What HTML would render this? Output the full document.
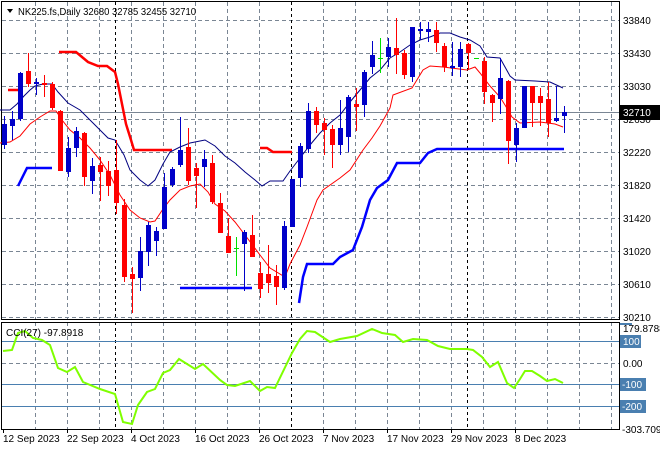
<!DOCTYPE html>
<html><head><meta charset="utf-8"><style>
html,body{margin:0;padding:0;background:#fff;}
svg{display:block;font-family:"Liberation Sans",sans-serif;}
</style></head><body>
<svg width="660" height="450" viewBox="0 0 660 450" xmlns="http://www.w3.org/2000/svg">
<rect width="660" height="450" fill="#fff"/>
<g stroke="#7a8694" stroke-width="1" stroke-dasharray="4,3">
<path d="M2 20.5H619M2 53.5H619M2 86.5H619M2 119.5H619M2 152.5H619M2 185.5H619M2 218.5H619M2 251.5H619M2 284.5H619M2 317.5H619"/>
<path d="M35.5 2V319M67.5 2V319M99.5 2V319M131.5 2V319M163.5 2V319M195.5 2V319M227.5 2V319M259.5 2V319M323.5 2V319M355.5 2V319M387.5 2V319M419.5 2V319M451.5 2V319M483.5 2V319M515.5 2V319M547.5 2V319M579.5 2V319M611.5 2V319"/>
<path d="M35.5 322V429M67.5 322V429M99.5 322V429M131.5 322V429M163.5 322V429M195.5 322V429M227.5 322V429M259.5 322V429M323.5 322V429M355.5 322V429M387.5 322V429M419.5 322V429M451.5 322V429M483.5 322V429M515.5 322V429M547.5 322V429M579.5 322V429M611.5 322V429"/>
<path d="M2 363.5H619"/>
</g>
<g stroke="#000" stroke-width="1" stroke-dasharray="3,3">
<path d="M115.5 2V319M291.5 2V319M467.5 2V319M115.5 322V429M291.5 322V429M467.5 322V429"/>
</g>
<g stroke="#4a7fb0" stroke-width="1">
<path d="M2 341.5H619M2 384.5H619M2 406.5H619"/>
</g>
<path d="M2 112.5H619" stroke="#7a8694" stroke-width="1"/>
<g stroke="#000" stroke-width="1" fill="none">
<path d="M1.5 1.5H619.5V319.5H1.5Z"/>
<path d="M1.5 322.5H619.5V429.5H1.5Z"/>
</g>
<g fill="none" stroke="#ff0000" stroke-width="2.5">
<polyline points="8,90 18,90"/>
<polyline points="59,52 76,52 82,57 88,62 98,66 107,66 115,72 118,84 122,104 126,124 131,140 134,150 172,150"/>
<polyline points="260,148 267,148 273,152 292,152"/>
</g>
<g fill="none" stroke="#0000ff" stroke-width="2.5">
<polyline points="18,186 22,178 27,168 52,168"/>
<polyline points="180,288 252,288"/>
<polyline points="299,303 303,277 307,264 333,264 340,257 353,250 362,227 370,200 377,188 388,180 397,163 420,163 428,153 437,149 564,149"/>
</g>
<polyline fill="none" stroke="#000080" stroke-width="1" points="0,110 10,110 17,104 24,96 30,90 35,86 43,84 52,84 58,92 68,103 80,110 95,125 108,138 115,140 124,155 130,170 140,180 148,186 155,180 163,164 170,152 180,147 190,143 200,141 205,140 215,146 225,156 235,163 245,172 255,180 262,186 270,181 283,181 290,171 300,158 310,145 320,133 330,123 340,115 350,102 360,90 370,78 380,70 390,58 400,52 410,45 420,40 430,37 440,33 450,33 460,37 470,40 480,46 487,57 500,58 510,76 515,80 535,81 550,82 563,88"/>
<polyline fill="none" stroke="#ff0000" stroke-width="1" points="0,143 10,142 20,136 30,124 40,117 50,111 56,111 62,120 70,130 80,138 90,148 100,160 110,175 120,195 130,210 140,218 150,222 155,221 163,209 170,200 180,190 190,186 200,184 208,192 215,204 225,211 235,222 245,235 260,255 270,268 285,277 290,264 300,245 307,227 317,200 323,190 340,178 350,170 363,150 372,138 380,126 390,108 393,95 412,88 423,70 430,66 443,67 467,70 475,67 480,73 490,86 500,97 505,105 512,117 520,123 540,122 555,124 563,127"/>
<g>
<g fill="#ff0000">
<rect x="28" y="53" width="1" height="34"/><rect x="26" y="71" width="5" height="13"/>
<rect x="44" y="75" width="1" height="22"/><rect x="42" y="83" width="5" height="2"/>
<rect x="52" y="82" width="1" height="28"/><rect x="50" y="84" width="5" height="24"/>
<rect x="60" y="110" width="1" height="61"/><rect x="58" y="111" width="5" height="60"/>
<rect x="84" y="132" width="1" height="54"/><rect x="82" y="133" width="5" height="44"/>
<rect x="100" y="157" width="1" height="44"/><rect x="98" y="165" width="5" height="7"/>
<rect x="108" y="161" width="1" height="35"/><rect x="106" y="171" width="5" height="15"/>
<rect x="116" y="140" width="1" height="74"/><rect x="114" y="170" width="5" height="33"/>
<rect x="124" y="199" width="1" height="83"/><rect x="122" y="205" width="5" height="72"/>
<rect x="132" y="267" width="1" height="46"/><rect x="130" y="274" width="5" height="5"/>
<rect x="188" y="128" width="1" height="57"/><rect x="186" y="147" width="5" height="34"/>
<rect x="196" y="163" width="1" height="45"/><rect x="194" y="168" width="5" height="8"/>
<rect x="212" y="155" width="1" height="49"/><rect x="210" y="163" width="5" height="39"/>
<rect x="220" y="193" width="1" height="40"/><rect x="218" y="203" width="5" height="30"/>
<rect x="228" y="218" width="1" height="35"/><rect x="226" y="236" width="5" height="17"/>
<rect x="252" y="215" width="1" height="42"/><rect x="250" y="235" width="5" height="22"/>
<rect x="260" y="262" width="1" height="36"/><rect x="258" y="273" width="5" height="16"/>
<rect x="268" y="245" width="1" height="48"/><rect x="266" y="274" width="5" height="9"/>
<rect x="276" y="265" width="1" height="40"/><rect x="274" y="276" width="5" height="11"/>
<rect x="316" y="107" width="1" height="26"/><rect x="314" y="111" width="5" height="14"/>
<rect x="324" y="118" width="1" height="37"/><rect x="322" y="123" width="5" height="7"/>
<rect x="332" y="125" width="1" height="43"/><rect x="330" y="129" width="5" height="16"/>
<rect x="356" y="88" width="1" height="43"/><rect x="354" y="104" width="5" height="3"/>
<rect x="396" y="18" width="1" height="56"/><rect x="394" y="48" width="5" height="7"/>
<rect x="404" y="50" width="1" height="29"/><rect x="402" y="53" width="5" height="22"/>
<rect x="436" y="22" width="1" height="30"/><rect x="434" y="30" width="5" height="13"/>
<rect x="444" y="43" width="1" height="29"/><rect x="442" y="46" width="5" height="21"/>
<rect x="468" y="43" width="1" height="26"/><rect x="466" y="44" width="5" height="9"/>
<rect x="484" y="57" width="1" height="47"/><rect x="482" y="61" width="5" height="31"/>
<rect x="492" y="94" width="1" height="28"/><rect x="490" y="95" width="5" height="8"/>
<rect x="508" y="80" width="1" height="84"/><rect x="506" y="81" width="5" height="60"/>
<rect x="532" y="86" width="1" height="41"/><rect x="530" y="86" width="5" height="17"/>
<rect x="540" y="88" width="1" height="38"/><rect x="538" y="96" width="5" height="7"/>
<rect x="548" y="82" width="1" height="55"/><rect x="546" y="99" width="5" height="24"/>
</g>
<g fill="#0000c8">
<rect x="4" y="116" width="1" height="33"/><rect x="2" y="124" width="5" height="21"/>
<rect x="12" y="111" width="1" height="29"/><rect x="10" y="119" width="5" height="7"/>
<rect x="20" y="72" width="1" height="49"/><rect x="18" y="73" width="5" height="46"/>
<rect x="36" y="78" width="1" height="17"/><rect x="34" y="82" width="5" height="2"/>
<rect x="68" y="137" width="1" height="40"/><rect x="66" y="148" width="5" height="24"/>
<rect x="76" y="127" width="1" height="30"/><rect x="74" y="131" width="5" height="17"/>
<rect x="92" y="158" width="1" height="36"/><rect x="90" y="166" width="5" height="15"/>
<rect x="140" y="237" width="1" height="54"/><rect x="138" y="251" width="5" height="27"/>
<rect x="148" y="222" width="1" height="44"/><rect x="146" y="225" width="5" height="27"/>
<rect x="156" y="227" width="1" height="29"/><rect x="154" y="231" width="5" height="10"/>
<rect x="164" y="173" width="1" height="56"/><rect x="162" y="187" width="5" height="42"/>
<rect x="172" y="167" width="1" height="20"/><rect x="170" y="169" width="5" height="16"/>
<rect x="180" y="117" width="1" height="50"/><rect x="178" y="150" width="5" height="15"/>
<rect x="204" y="150" width="1" height="37"/><rect x="202" y="159" width="5" height="8"/>
<rect x="244" y="230" width="1" height="61"/><rect x="242" y="232" width="5" height="12"/>
<rect x="284" y="221" width="1" height="69"/><rect x="282" y="226" width="5" height="62"/>
<rect x="292" y="179" width="1" height="48"/><rect x="290" y="179" width="5" height="48"/>
<rect x="300" y="143" width="1" height="44"/><rect x="298" y="146" width="5" height="32"/>
<rect x="308" y="103" width="1" height="50"/><rect x="306" y="111" width="5" height="38"/>
<rect x="340" y="100" width="1" height="55"/><rect x="338" y="128" width="5" height="17"/>
<rect x="348" y="95" width="1" height="57"/><rect x="346" y="97" width="5" height="40"/>
<rect x="364" y="70" width="1" height="47"/><rect x="362" y="72" width="5" height="33"/>
<rect x="372" y="41" width="1" height="33"/><rect x="370" y="55" width="5" height="12"/>
<rect x="388" y="38" width="1" height="29"/><rect x="386" y="47" width="5" height="10"/>
<rect x="412" y="27" width="1" height="55"/><rect x="410" y="27" width="5" height="50"/>
<rect x="420" y="22" width="1" height="18"/><rect x="418" y="29" width="5" height="2"/>
<rect x="428" y="22" width="1" height="20"/><rect x="426" y="29" width="5" height="3"/>
<rect x="452" y="42" width="1" height="34"/><rect x="450" y="66" width="5" height="2"/>
<rect x="460" y="42" width="1" height="35"/><rect x="458" y="49" width="5" height="18"/>
<rect x="500" y="58" width="1" height="56"/><rect x="498" y="78" width="5" height="21"/>
<rect x="516" y="123" width="1" height="39"/><rect x="514" y="128" width="5" height="17"/>
<rect x="524" y="86" width="1" height="42"/><rect x="522" y="86" width="5" height="42"/>
<rect x="556" y="86" width="1" height="36"/><rect x="554" y="118" width="5" height="3"/>
<rect x="564" y="106" width="1" height="27"/><rect x="562" y="112" width="5" height="4"/>
</g>
<g fill="#00e000">
<rect x="236" y="237" width="1" height="39"/><rect x="234" y="248" width="5" height="1"/>
<rect x="380" y="38" width="1" height="35"/><rect x="378" y="58" width="5" height="1"/>
<rect x="474" y="58" width="5" height="1"/>
</g>
</g>
<polyline fill="none" stroke="#7fff00" stroke-width="2" points="3,351 12,350 18,333 25,331 33,338 42,340 50,345 58,368 67,372 75,367 83,382 100,389 115,394 123,422 132,424 138,405 147,392 155,389 163,373 170,370 179,359 195,369 203,364 220,380 227,385 235,386 250,381 260,391 267,387 275,388 292,353 300,339 307,331 315,332 330,342 340,339 357,336 372,329 382,333 395,335 403,342 413,339 427,340 438,346 450,349 467,349 473,350 482,357 490,367 498,362 507,383 514,388 520,379 525,371 532,371 540,376 547,381 555,379 563,383"/>
<path d="M7 9H13L10 13Z" fill="#000"/>
<text x="18" y="15" font-size="10.5" fill="#000" textLength="178" lengthAdjust="spacingAndGlyphs">NK225.fs,Daily  32680 32785 32455 32710</text>
<text x="6" y="336" font-size="10" fill="#000">CCI(27) -97.8918</text>
<g font-size="10" fill="#000">
<text x="623" y="24">33840</text>
<text x="623" y="57">33430</text>
<text x="623" y="90">33030</text>
<text x="623" y="123">32630</text>
<text x="623" y="156">32220</text>
<text x="623" y="189">31820</text>
<text x="623" y="222">31420</text>
<text x="623" y="255">31020</text>
<text x="623" y="288">30610</text>
<text x="623" y="321">30210</text>
</g>
<rect x="620" y="105" width="40" height="15" fill="#000"/>
<text x="623" y="116" font-size="10" fill="#fff">32710</text>
<rect x="620" y="323" width="12" height="2" fill="#4a7fb0"/>
<rect x="620" y="335" width="21" height="13" fill="#4a7fb0"/>
<rect x="620" y="378" width="26" height="13" fill="#4a7fb0"/>
<rect x="620" y="400" width="26" height="13" fill="#4a7fb0"/>
<g font-size="10" fill="#000">
<text x="623" y="332">179.8788</text>
<text x="623" y="367">0.00</text>
<text x="622" y="433">-303.709</text>
</g>
<g font-size="10" fill="#fff">
<text x="623" y="345">100</text>
<text x="622" y="388">-100</text>
<text x="622" y="410">-200</text>
</g>
<g stroke="#000" stroke-width="1">
<path d="M3.5 429V433M67.5 429V433M131.5 429V433M195.5 429V433M259.5 429V433M323.5 429V433M387.5 429V433M451.5 429V433M515.5 429V433"/>
</g>
<g font-size="10" fill="#000">
<text x="3" y="442">12 Sep 2023</text>
<text x="67" y="442">22 Sep 2023</text>
<text x="131" y="442">4 Oct 2023</text>
<text x="195" y="442">16 Oct 2023</text>
<text x="259" y="442">26 Oct 2023</text>
<text x="323" y="442">7 Nov 2023</text>
<text x="387" y="442">17 Nov 2023</text>
<text x="451" y="442">29 Nov 2023</text>
<text x="515" y="442">8 Dec 2023</text>
</g>
</svg>
</body></html>
